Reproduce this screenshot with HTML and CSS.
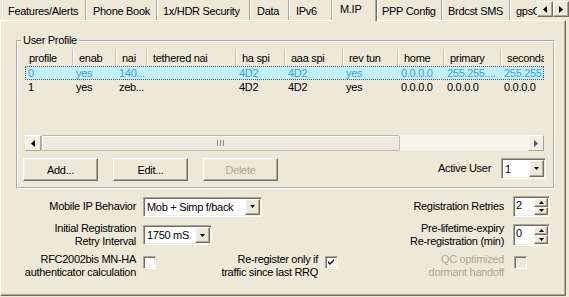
FILE: index.html
```html
<!DOCTYPE html>
<html>
<head>
<meta charset="utf-8">
<link rel="stylesheet" href="styles.css">
</head>
<body>
<div class="win">
  <div class="tabstrip">
    <div class="tab w-feat">Features/Alerts</div>
    <div class="tab w-phone">Phone Book</div>
    <div class="tab w-sec">1x/HDR Security</div>
    <div class="tab w-data">Data</div>
    <div class="tab w-ipv6">IPv6</div>
    <div class="tab tab-sel w-mip">M.IP</div>
    <div class="tab w-ppp">PPP Config</div>
    <div class="tab w-sms">Brdcst SMS</div>
    <div class="tab w-gps">gpsOne</div>
    <div class="tab-scroll">
      <span class="raised sbtn"><svg width="4" height="7" viewBox="0 0 4 7"><polygon points="4,0 4,7 0,3.5" fill="#000"/></svg></span>
      <span class="raised sbtn"><svg width="4" height="7" viewBox="0 0 4 7"><polygon points="0,0 4,3.5 0,7" fill="#000"/></svg></span>
    </div>
  </div>

  <div class="panel">
    <fieldset class="group">
      <legend>User Profile</legend>
      <div class="listview">
        <div class="lv-head">
          <span class="h c1 first">profile</span>
          <span class="h c2">enab</span>
          <span class="h c3">nai</span>
          <span class="h c4">tethered nai</span>
          <span class="h c5">ha spi</span>
          <span class="h c6">aaa spi</span>
          <span class="h c7">rev tun</span>
          <span class="h c8">home</span>
          <span class="h c9">primary</span>
          <span class="h c10">secondary</span>
        </div>
        <div class="lv-body">
          <div class="lv-row sel">
            <span class="d c1">0</span>
            <span class="d c2">yes</span>
            <span class="d c3">140...</span>
            <span class="d c4"></span>
            <span class="d c5">4D2</span>
            <span class="d c6">4D2</span>
            <span class="d c7">yes</span>
            <span class="d c8">0.0.0.0</span>
            <span class="d c9">255.255....</span>
            <span class="d c10">255.255....</span>
          </div>
          <div class="lv-row">
            <span class="d c1">1</span>
            <span class="d c2">yes</span>
            <span class="d c3">zeb...</span>
            <span class="d c4"></span>
            <span class="d c5">4D2</span>
            <span class="d c6">4D2</span>
            <span class="d c7">yes</span>
            <span class="d c8">0.0.0.0</span>
            <span class="d c9">0.0.0.0</span>
            <span class="d c10">0.0.0.0</span>
          </div>
        </div>
        <div class="hscroll">
          <span class="hs-btn"><svg width="4" height="7" viewBox="0 0 4 7"><polygon points="4,0 4,7 0,3.5" fill="#000"/></svg></span>
          <span class="hs-thumb"><svg width="7" height="6" viewBox="0 0 7 6"><rect x="0" y="0" width="1" height="6" fill="#8C8A7E"/><rect x="3" y="0" width="1" height="6" fill="#8C8A7E"/><rect x="6" y="0" width="1" height="6" fill="#8C8A7E"/></svg></span>
          <span class="hs-track"></span>
          <span class="hs-btn"><svg width="4" height="7" viewBox="0 0 4 7"><polygon points="0,0 4,3.5 0,7" fill="#555"/></svg></span>
        </div>
      </div>
      <div class="group-actions">
        <span class="raised btn">Add...</span>
        <span class="raised btn">Edit...</span>
        <span class="raised btn disabled">Delete</span>
        <span class="active-label">Active User</span>
        <span class="sunken combo combo-user">
          <span class="combo-text">1</span>
          <span class="raised drop"><svg width="5" height="3" viewBox="0 0 5 3"><polygon points="0,0 5,0 2.5,3" fill="#000"/></svg></span>
        </span>
      </div>
    </fieldset>

    <div class="form">
      <span class="lbl col-a r1">Mobile IP Behavior</span>
      <span class="sunken combo combo-mob r1">
        <span class="combo-text">Mob + Simp f/back</span>
        <span class="raised drop"><svg width="5" height="3" viewBox="0 0 5 3"><polygon points="0,0 5,0 2.5,3" fill="#000"/></svg></span>
      </span>
      <span class="lbl col-e r1">Registration Retries</span>
      <span class="sunken spin r1 spin-a">
        <span class="spin-val">2</span>
        <span class="spin-btns">
          <span class="raised sb"><svg width="5" height="3" viewBox="0 0 5 3"><polygon points="0,3 5,3 2.5,0" fill="#000"/></svg></span>
          <span class="raised sb"><svg width="5" height="3" viewBox="0 0 5 3"><polygon points="0,0 5,0 2.5,3" fill="#000"/></svg></span>
        </span>
      </span>

      <span class="lbl col-a r2">Initial Registration<br>Retry Interval</span>
      <span class="sunken combo combo-retry r2">
        <span class="combo-text">1750 mS</span>
        <span class="raised drop"><svg width="5" height="3" viewBox="0 0 5 3"><polygon points="0,0 5,0 2.5,3" fill="#000"/></svg></span>
      </span>
      <span class="lbl col-e r2">Pre-lifetime-expiry<br>Re-registration (min)</span>
      <span class="sunken spin r2 spin-b">
        <span class="spin-val">0</span>
        <span class="spin-btns">
          <span class="raised sb"><svg width="5" height="3" viewBox="0 0 5 3"><polygon points="0,3 5,3 2.5,0" fill="#000"/></svg></span>
          <span class="raised sb"><svg width="5" height="3" viewBox="0 0 5 3"><polygon points="0,0 5,0 2.5,3" fill="#000"/></svg></span>
        </span>
      </span>

      <span class="lbl col-a r3">RFC2002bis MN-HA<br>authenticator calculation</span>
      <span class="sunken check col-b r3"></span>
      <span class="lbl col-c r3">Re-register only if<br>traffic since last RRQ</span>
      <span class="sunken check col-d r3"><svg width="7" height="7" viewBox="0 0 7 7"><path d="M0 2 L2 4 L6 0 L6 2 L2 6 L0 4 Z" fill="#000"/></svg></span>
      <span class="lbl col-e r3 disabled">QC optimized<br>dormant handoff</span>
      <span class="sunken check check-off col-f r3"></span>
    </div>
  </div>
</div>
</body>
</html>
```

FILE: styles.css
```css
* { box-sizing: border-box; }
html, body { margin: 0; padding: 0; }
body {
  width: 569px;
  height: 297px;
  overflow: hidden;
  background: #ECE9D8;
  font-family: "Liberation Sans", Arial, sans-serif;
  font-size: 11px;
  letter-spacing: -0.3px;
  color: #000;
}
.win { width: 569px; height: 297px; }

/* 3D borders */
.raised {
  background: #ECE9D8;
  border: 1px solid;
  border-color: #fff #716F64 #716F64 #fff;
  box-shadow: inset -1px -1px #ACA899, inset 1px 1px #F1EFE2;
}
.sunken {
  background: #fff;
  border: 1px solid;
  border-color: #ACA899 #fff #fff #ACA899;
  box-shadow: inset 1px 1px #716F64, inset -1px -1px #F1EFE2;
  padding: 1px;
}

/* Tabs */
.tabstrip { display: flex; height: 20px; padding-left: 2px; }
.tab {
  flex: none;
  height: 20px;
  border-left: 1px solid #fff;
  border-right: 1px solid #ACA899;
  padding: 5px 0 0 5px;
  line-height: 13px;
  white-space: nowrap;
  overflow: hidden;
}
.tab-sel {
  height: 21px;
  margin-bottom: -1px;
  padding: 3px 0 0 7px;
  position: relative;
  z-index: 1;
  background: #ECE9D8;
  border-right-color: #716F64;
  box-shadow: inset -1px 0 #ACA899;
}
.w-feat { width: 84px; }
.w-phone { width: 71px; padding-left: 6px; }
.w-sec { width: 93px; }
.w-data { width: 39px; padding-left: 6px; }
.w-ipv6 { width: 43px; padding-left: 6px; }
.w-mip { width: 45px; }
.w-ppp { width: 65px; padding-left: 4px; }
.w-sms { width: 68px; }
.w-gps { width: 27px; border-right: none; }
.tab-scroll { display: flex; flex: none; margin-top: 1px; height: 16px; }
.sbtn { width: 16px; height: 16px; display: flex; align-items: center; justify-content: center; }

/* Panel */
.panel {
  width: 566px;
  height: 276px;
  border: 1px solid;
  border-color: #fff #716F64 #716F64 #fff;
  box-shadow: inset -1px -1px #ACA899;
}

/* Group box */
.group {
  margin: 13px 0 0 15px;
  width: 539px;
  border: 2px groove #fff;
  padding: 2px 9px 6px 7px;
  min-width: 0;
}
.group legend { padding: 0 2px; margin-left: -4px; line-height: 13px; }

/* List view */
.listview {
  width: 519px;
  height: 102px;
  display: flex;
  flex-direction: column;
  overflow: hidden;
}
.lv-head { display: flex; height: 17px; flex: none; background: #ECE9D8; overflow: hidden; }
.h {
  flex: none;
  height: 17px;
  line-height: 18px;
  padding-left: 6px;
  border-right: 1px solid #C5C2B2;
  box-shadow: 1px 0 #fff;
  white-space: nowrap;
  overflow: hidden;
}
.h.first { padding-left: 4px; }
.lv-body { flex: 1; overflow: hidden; }
.lv-row { display: flex; height: 14px; line-height: 13px; padding-top: 1px; }
.d { flex: none; padding-left: 3px; white-space: nowrap; overflow: hidden; }
.lv-row.sel {
  background: #C2F0FD;
  color: #3E9ED6;
  outline: 1px dotted #555;
  outline-offset: -1px;
}
.c1 { width: 48px; }
.c2 { width: 43px; }
.c3 { width: 31px; }
.c4 { width: 89px; }
.c5 { width: 49px; }
.c6 { width: 58px; }
.c7 { width: 55px; }
.c8 { width: 46px; }
.c9 { width: 57px; }
.c10 { width: 80px; }

.hscroll { display: flex; height: 16px; flex: none; background: #F5F4EE; }
.hs-btn {
  width: 16px; flex: none;
  display: flex; align-items: center; justify-content: center;
  background: #F0EFE7;
  border: 1px solid;
  border-color: #fff #A9A694 #A9A694 #fff;
}
.hs-thumb {
  width: 359px; flex: none;
  display: flex; align-items: center; justify-content: center;
  background: #EDEBE1;
  border: 1px solid #BDBAA8;
  border-radius: 2px;
  box-shadow: inset 1px 1px #fff;
}
.hs-track { flex: 1; }

/* Actions row */
.group-actions { display: flex; align-items: flex-start; margin: 7px -2px 0 -2px; }
.btn {
  width: 75px; height: 23px; margin-right: 15px;
  display: flex; align-items: center; justify-content: center;
}
.btn.disabled, .disabled { color: #ACA899; }
.active-label { margin-left: auto; margin-right: 10px; line-height: 21px; }

/* Combo */
.combo { display: flex; }
.combo-text { flex: 1; display: flex; align-items: center; padding-left: 2px; white-space: nowrap; }
.drop { width: 15px; flex: none; display: flex; align-items: center; justify-content: center; }
.combo-user { width: 45px; height: 21px; }
.combo-mob { width: 119px; height: 20px; grid-column: 2 / span 2; justify-self: start; align-self: center; }
.combo-retry { width: 69px; height: 20px; grid-column: 2; justify-self: start; align-self: center; }

/* Form grid */
.form {
  display: grid;
  grid-template-columns: 132px 72px 110px 13px 175px 36px;
  grid-template-rows: 21px 22px 26px;
  row-gap: 7px;
  margin: 7px 0 0 10px;
}
.r1 { grid-row: 1; }
.r2 { grid-row: 2; }
.r3 { grid-row: 3; }
.lbl { text-align: right; line-height: 13px; align-self: center; white-space: nowrap; }
.col-a { grid-column: 1; padding-right: 7px; }
.col-b { grid-column: 2; }
.col-c { grid-column: 3; padding-right: 7px; }
.col-d { grid-column: 4; }
.col-e { grid-column: 5; padding-right: 9px; }
.col-f { grid-column: 6; }

/* Spin */
.spin { grid-column: 6; width: 37px; display: flex; align-self: center; }
.spin-a { height: 21px; }
.spin-b { height: 22px; }
.spin-val { flex: 1; padding: 1px 0 0 1px; line-height: 13px; }
.spin-btns { width: 14px; display: flex; flex-direction: column; }
.sb { flex: 1; display: flex; align-items: center; justify-content: center; }

/* Checkbox */
.check {
  width: 13px; height: 13px;
  align-self: start; margin-top: 3px;
  display: flex; align-items: center; justify-content: center;
}
.check-off { background: #ECE9D8; margin-left: 1px; }
```
